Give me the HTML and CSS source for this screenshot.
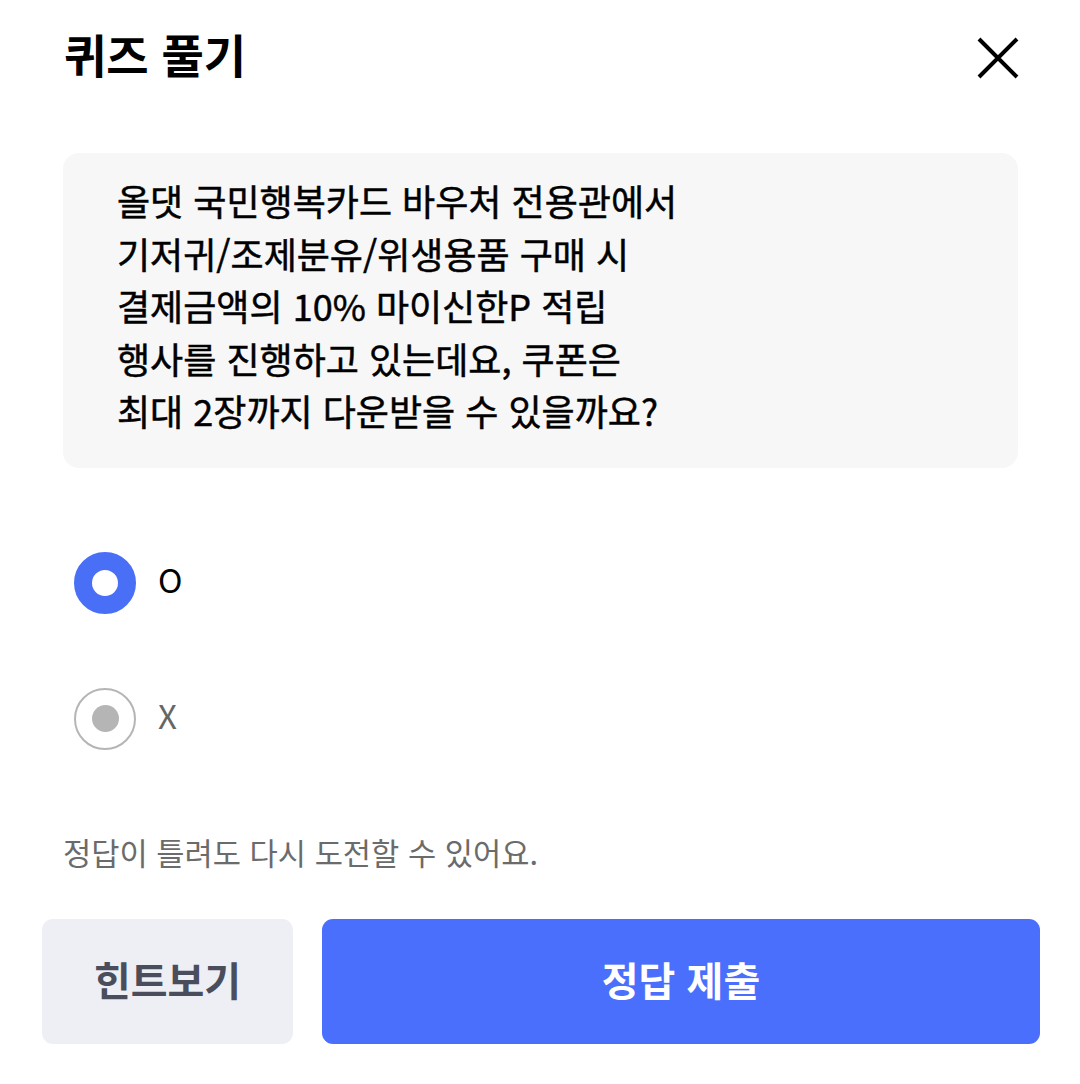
FILE: index.html
```html
<!DOCTYPE html>
<html lang="ko">
<head>
<meta charset="utf-8">
<link rel="stylesheet" href="styles.css">
</head>
<body>
<div class="sheet">
  <header class="header">
    <h1 class="title">퀴즈 풀기</h1>
    <button class="close" aria-label="닫기">
      <svg width="44" height="44" viewBox="0 0 44 44"><path d="M3 3 L41 41 M41 3 L3 41" stroke="#000" stroke-width="4" stroke-linecap="butt" fill="none"/></svg>
    </button>
  </header>
  <div class="question">
    <p>올댓 국민행복카드 바우처 전용관에서<br>기저귀/조제분유/위생용품 구매 시<br>결제금액의 10% 마이신한P 적립<br>행사를 진행하고 있는데요, 쿠폰은<br>최대 2장까지 다운받을 수 있을까요?</p>
  </div>
  <div class="options">
    <label class="option">
      <span class="radio radio-on"></span>
      <span class="opt-label on">O</span>
    </label>
    <label class="option">
      <span class="radio radio-off"><span class="dot"></span></span>
      <span class="opt-label off">X</span>
    </label>
  </div>
  <p class="notice">정답이 틀려도 다시 도전할 수 있어요.</p>
  <div class="actions">
    <button class="btn btn-hint">힌트보기</button>
    <button class="btn btn-submit">정답 제출</button>
  </div>
</div>
</body>
</html>
```

FILE: styles.css
```css
* { box-sizing: border-box; }
html, body { margin: 0; padding: 0; background: #fff; }
body {
  font-family: "Noto Sans CJK KR", "Noto Sans", sans-serif;
  color: #000;
  width: 1080px;
  height: 1084px;
  overflow: hidden;
}
.sheet { display: flex; flex-direction: column; }
.header {
  display: flex;
  justify-content: space-between;
  align-items: center;
  height: 112px;
  padding: 0 60px 0 64px;
}
.title {
  margin: 0 0 6px;
  font-size: 46px;
  font-weight: 700;
  letter-spacing: 0;
  line-height: 1;
}
.close {
  border: 0;
  background: none;
  padding: 0;
  width: 44px;
  height: 44px;
  display: flex;
  margin-top: 4px;
}
.question {
  margin: 41px 62px 0 63px;
  background: #f7f7f7;
  border-radius: 16px;
  padding: 21px 50px 31px 54px;
}
.question p {
  margin: 0;
  font-size: 36px;
  line-height: 52.5px;
  font-weight: 400;
  color: #000;
  -webkit-text-stroke: 0.5px #000;
}
.options {
  display: flex;
  flex-direction: column;
  gap: 74px;
  margin: 84px 0 0 74px;
}
.option { display: flex; align-items: center; gap: 22px; height: 62px; }
.radio {
  width: 62px;
  height: 62px;
  border-radius: 50%;
  display: flex;
  align-items: center;
  justify-content: center;
  flex: none;
}
.radio-on { border: 18px solid #4a6ff7; background: #fff; }
.radio-off { border: 2px solid #b5b5b5; background: #fff; }
.radio-off .dot { width: 27px; height: 27px; border-radius: 50%; background: #b5b5b5; }
.opt-label { font-size: 33px; line-height: 1; margin-top: -6px; }
.opt-label.on { color: #000; }
.opt-label.off { color: #666; }
.notice {
  margin: 82px 0 0 63px;
  font-size: 30.7px;
  line-height: 40px;
  color: #6b6b6b;
}
.actions {
  display: flex;
  gap: 29px;
  margin: 47px 40px 0 42px;
}
.btn {
  border: 0;
  height: 125px;
  border-radius: 11px;
  font-family: inherit;
  font-size: 40px;
  font-weight: 700;
  padding: 0 0 5px;
}
.btn-hint { width: 251px; background: #eeeff4; color: #4a4e5c; }
.btn-submit { flex: 1; background: #4a6ffc; color: #fff; }
```
